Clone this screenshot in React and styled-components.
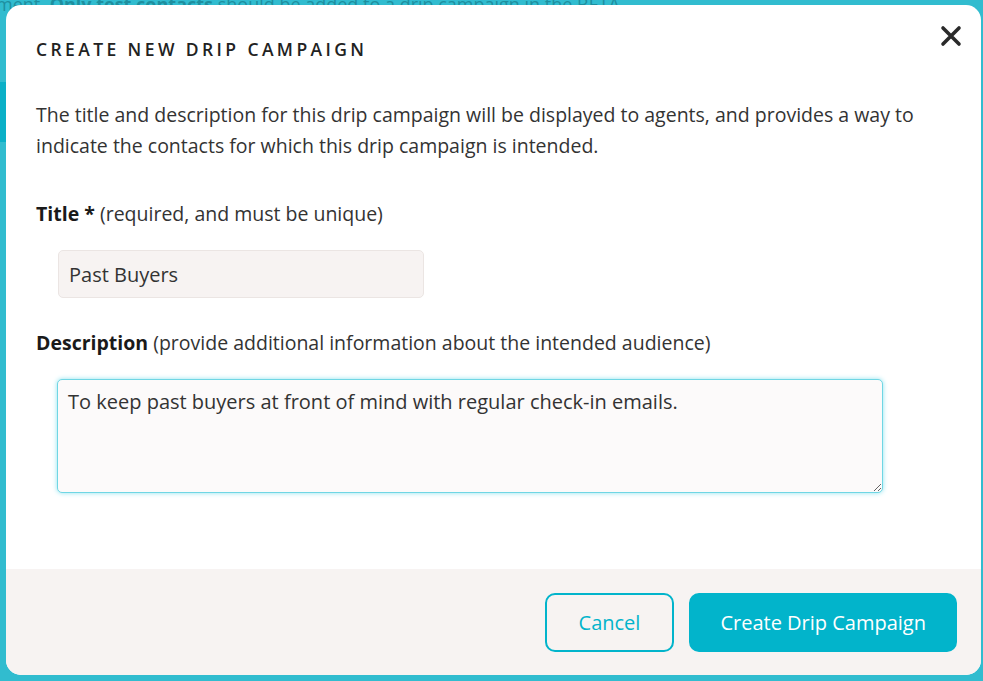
import React, { useEffect, useRef } from 'react'
import styled, { createGlobalStyle } from 'styled-components'

const Global = createGlobalStyle`
  html, body {
    margin: 0;
    padding: 0;
    height: 100%;
  }
  body {
    font-family: "Open Sans", "Noto Sans", sans-serif;
    background: #31bccf;
    overflow: hidden;
  }
`

// page behind the overlay
const Backdrop = styled.div`
  position: relative;
  width: 983px;
  height: 681px;
  background: #31bccf;
  overflow: hidden;
  padding: 5px 2px 6px 6px;
  box-sizing: border-box;
`
const BehindText = styled.div`
  position: absolute;
  top: -8px;
  left: -4px;
  font-size: 18px;
  color: #1e8f9f;
  white-space: nowrap;
  b { font-weight: 700; }
`
const BehindBand = styled.div`
  position: absolute;
  top: 82px;
  left: 0;
  width: 6px;
  height: 60px;
  background: #0bb0c7;
`

const Modal = styled.div`
  position: relative;
  height: 100%;
  background: #fff;
  border-radius: 15px;
  overflow: hidden;
  display: flex;
  flex-direction: column;
`
const Body = styled.div`
  flex: 1;
  padding: 32px 30px 0 30px;
  display: flex;
  flex-direction: column;
`
const Heading = styled.h2`
  margin: 0 0 38px;
  font-size: 17.5px;
  font-weight: 600;
  letter-spacing: 3.4px;
  color: #222;
  text-transform: uppercase;
`
const Close = styled.button`
  position: absolute;
  top: 16px;
  right: 15px;
  width: 30px;
  height: 30px;
  padding: 0;
  border: none;
  background: none;
  display: flex;
  align-items: center;
  justify-content: center;
`
const Intro = styled.p`
  margin: 0 0 40px;
  font-size: 19.5px;
  line-height: 31px;
  color: #333;
`
const Field = styled.div`
  display: flex;
  flex-direction: column;
  align-items: flex-start;
  gap: 23px;
  padding-bottom: 32px;
`
const Label = styled.div`
  font-size: 19.5px;
  line-height: 26px;
  color: #333;
  b { font-weight: 700; color: #1a1a1a; }
`
const TitleInput = styled.input`
  margin-left: 22px;
  width: 366px;
  height: 48px;
  box-sizing: border-box;
  padding: 0 10px;
  font-family: inherit;
  font-size: 20px;
  color: #333;
  background: #f7f3f2;
  border: 1px solid #ebe5e3;
  border-radius: 5px;
  outline: none;
`
const DescArea = styled.textarea`
  margin-left: 21px;
  width: 826px;
  height: 114px;
  box-sizing: border-box;
  padding: 9px 10px;
  font-family: inherit;
  font-size: 20px;
  line-height: 26px;
  color: #333;
  background: #fcfafa;
  border: 1px solid #6fd6e4;
  border-radius: 5px;
  box-shadow: 0 0 5px #8ee2ee;
  outline: none;
  resize: both;
  caret-color: #000;
`
const Footer = styled.div`
  height: 106px;
  background: #f7f3f2;
  display: flex;
  align-items: center;
  justify-content: flex-end;
  gap: 15px;
  padding: 0 24px 0 0;
`
const Button = styled.button`
  height: 59px;
  padding: 0 ${p => (p.$primary ? 29 : 32)}px;
  font-family: inherit;
  font-size: 20px;
  border-radius: 10px;
  border: 2px solid #02b4cb;
  background: ${p => (p.$primary ? '#02b4cb' : 'transparent')};
  color: ${p => (p.$primary ? '#fff' : '#02b4cb')};
  cursor: pointer;
`

export default function App() {
  const area = useRef(null)

  useEffect(() => {
    const el = area.current
    if (el) {
      el.focus()
      el.setSelectionRange(el.value.length, el.value.length)
    }
  }, [])

  return (
    <>
      <Global />
      <Backdrop>
        <BehindText>
          ment. <b>Only test contacts</b> should be added to a drip campaign in the BETA.
        </BehindText>
        <BehindBand />
        <Modal>
          <Body>
            <Heading>Create New Drip Campaign</Heading>
            <Intro>
              The title and description for this drip campaign will be displayed to agents, and provides a way to
              indicate the contacts for which this drip campaign is intended.
            </Intro>
            <Field>
              <Label>
                <b>Title *</b> (required, and must be unique)
              </Label>
              <TitleInput defaultValue="Past Buyers" />
            </Field>
            <Field>
              <Label>
                <b>Description</b> (provide additional information about the intended audience)
              </Label>
              <DescArea ref={area} defaultValue="To keep past buyers at front of mind with regular check-in emails." />
            </Field>
          </Body>
          <Footer>
            <Button>Cancel</Button>
            <Button $primary>Create Drip Campaign</Button>
          </Footer>
          <Close aria-label="close">
            <svg width="22" height="22" viewBox="0 0 22 22">
              <path d="M3 3 L19 19 M19 3 L3 19" stroke="#2a2a2a" strokeWidth="3.6" strokeLinecap="round" />
            </svg>
          </Close>
        </Modal>
      </Backdrop>
    </>
  )
}
